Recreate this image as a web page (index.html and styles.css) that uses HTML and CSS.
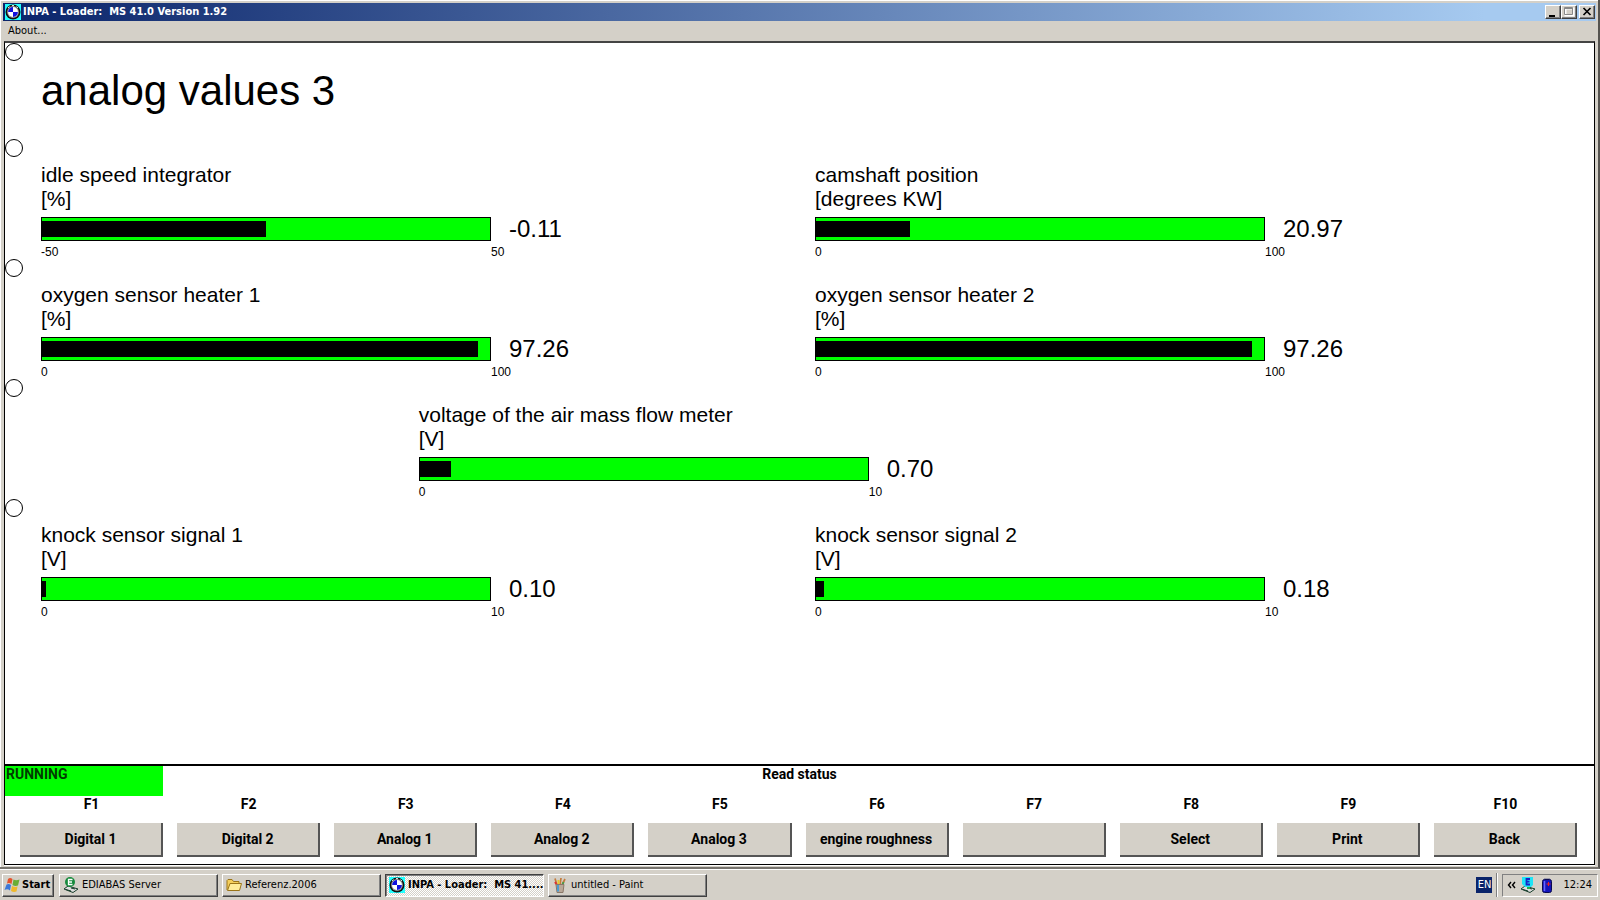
FILE: index.html
```
<!DOCTYPE html>
<html lang="en">
<head>
<meta charset="utf-8">
<title>INPA - Loader: MS 41.0 Version 1.92</title>
<link rel="stylesheet" href="styles.css">
</head>
<body>
<svg class="defs" aria-hidden="true">
  <symbol id="roundel" viewBox="0 0 16 16">
    <rect width="16" height="16" fill="#2ff"/>
    <circle cx="8" cy="8" r="7.5" fill="#111"/>
    <circle cx="8" cy="8" r="5.9" fill="#999"/>
    <circle cx="8" cy="8" r="4.9" fill="#fff"/>
    <path d="M8 8V3.100A4.900 4.900 0 0 0 3.100 8zM8 8v4.900A4.900 4.900 0 0 0 12.900 8z" fill="#11d"/>
    <path d="M3 4l1.500-1.500M11.500 2.500L13 4M7 1.500h2" stroke="#ddd"/>
  </symbol>
  <symbol id="server" viewBox="0 0 16 16">
    <path d="M1 12l4-3 10 3-5 3.500z" fill="#ddd" stroke="#173d2a"/>
    <path d="M3 12.500l5 1.500M8 11l4 1" stroke="#173d2a"/>
  </symbol>
</svg>
<div class="screen">
  <main class="window">
    <header class="titlebar">
      <svg class="icon"><use href="#roundel"/></svg>
      <h1 class="caption">INPA - Loader:&nbsp; MS 41.0 Version 1.92</h1>
      <div class="controls">
        <button class="ctl" aria-label="Minimize"><svg width="14" height="12"><path d="M3 9h6v2H3z"/></svg></button>
        <button class="ctl" aria-label="Maximize" disabled><svg width="14" height="12"><path d="M3.500 2.500h8v7h-8z" fill="none" stroke="#fff" stroke-width="2"/><path d="M2.500 1.500h8v7h-8zM2.500 2.500h8" fill="none" stroke="#888"/></svg></button>
        <button class="ctl close" aria-label="Close"><svg width="14" height="12"><path d="M3.500 2l7 7M10.500 2l-7 7" stroke="#000" stroke-width="1.700"/></svg></button>
      </div>
    </header>
    <nav class="menubar"><button class="menu">About...</button></nav>
    <section class="client">
      <div class="panel">
        <div class="row head"><i class="dot"></i><h2>analog values 3</h2></div>
        <div class="row"><i class="dot"></i>
          <div class="gauge"><div class="label">idle speed integrator<br>[%]</div><div class="line"><div class="bar"><div class="fill" style="width:49.89%"></div></div><output>-0.11</output></div><div class="scale"><span>-50</span><span>50</span></div></div>
          <div class="gauge"><div class="label">camshaft position<br>[degrees KW]</div><div class="line"><div class="bar"><div class="fill" style="width:20.97%"></div></div><output>20.97</output></div><div class="scale"><span>0</span><span>100</span></div></div>
        </div>
        <div class="row"><i class="dot"></i>
          <div class="gauge"><div class="label">oxygen sensor heater 1<br>[%]</div><div class="line"><div class="bar"><div class="fill" style="width:97.26%"></div></div><output>97.26</output></div><div class="scale"><span>0</span><span>100</span></div></div>
          <div class="gauge"><div class="label">oxygen sensor heater 2<br>[%]</div><div class="line"><div class="bar"><div class="fill" style="width:97.26%"></div></div><output>97.26</output></div><div class="scale"><span>0</span><span>100</span></div></div>
        </div>
        <div class="row"><i class="dot"></i>
          <div class="gauge middle"><div class="label">voltage of the air mass flow meter<br>[V]</div><div class="line"><div class="bar"><div class="fill" style="width:7%"></div></div><output>0.70</output></div><div class="scale"><span>0</span><span>10</span></div></div>
        </div>
        <div class="row"><i class="dot"></i>
          <div class="gauge"><div class="label">knock sensor signal 1<br>[V]</div><div class="line"><div class="bar"><div class="fill" style="width:1%"></div></div><output>0.10</output></div><div class="scale"><span>0</span><span>10</span></div></div>
          <div class="gauge"><div class="label">knock sensor signal 2<br>[V]</div><div class="line"><div class="bar"><div class="fill" style="width:1.8%"></div></div><output>0.18</output></div><div class="scale"><span>0</span><span>10</span></div></div>
        </div>
      </div>
      <div class="status"><div class="running">RUNNING</div><div class="state">Read status</div></div>
      <div class="keys">
        <div class="key"><label for="f1">F1</label><button id="f1">Digital 1</button></div>
        <div class="key"><label for="f2">F2</label><button id="f2">Digital 2</button></div>
        <div class="key"><label for="f3">F3</label><button id="f3">Analog 1</button></div>
        <div class="key"><label for="f4">F4</label><button id="f4">Analog 2</button></div>
        <div class="key"><label for="f5">F5</label><button id="f5">Analog 3</button></div>
        <div class="key"><label for="f6">F6</label><button id="f6">engine roughness</button></div>
        <div class="key"><label for="f7">F7</label><button id="f7"></button></div>
        <div class="key"><label for="f8">F8</label><button id="f8">Select</button></div>
        <div class="key"><label for="f9">F9</label><button id="f9">Print</button></div>
        <div class="key"><label for="f10">F10</label><button id="f10">Back</button></div>
      </div>
    </section>
  </main>
  <footer class="taskbar">
    <button class="start"><svg class="icon" viewBox="0 0 16 16"><path d="M4 2q2-2 4.500 0L7.500 7Q5 5.500 3 6.500z" fill="#e5532d"/><path d="M9.500 2.500q2.500 1.500 6 0L14 8.500Q11 9.500 8.500 8z" fill="#69ad35"/><path d="M2.500 7.500q2.500-1 4.500 .5L6 13.500q-2.500-2-5.500-.5z" fill="#3c78d8"/><path d="M8 9q3 1.500 5.500 .5L12.500 14.500Q9.500 15.500 7 14z" fill="#f0b82a"/></svg>Start</button>
    <button class="task"><svg class="icon" viewBox="0 0 16 16"><use href="#server"/><circle cx="7" cy="5" r="5" fill="#168a3c"/><path d="M9.500 2.500h-4v5h4M5.500 5h3.500" fill="none" stroke="#fff" stroke-width="1.300"/></svg><span>EDIABAS Server</span></button>
    <button class="task"><svg class="icon" viewBox="0 0 16 16"><path d="M1 13V3.500L2 2.500h4l1.500 2H13V7" fill="#f5cf5c" stroke="#9b7418"/><path d="M1.500 13.500L4 6.500h11.500L13.500 13.500z" fill="#ffec9a" stroke="#9b7418"/></svg><span>Referenz.2006</span></button>
    <button class="task active"><svg class="icon"><use href="#roundel"/></svg><span>INPA - Loader:&nbsp; MS 41....</span></button>
    <button class="task"><svg class="icon" viewBox="0 0 16 16"><path d="M5 8L3 1.500M8 8l1-7M10 8l3-6" stroke="#c27a3a" stroke-width="1.700"/><path d="M3 5l2 3" stroke="#d33" stroke-width="2"/><path d="M6.500 3v5" stroke="#e8c92e" stroke-width="2"/><path d="M11.500 5l-1 3" stroke="#4b9b4b" stroke-width="2"/><path d="M4 7.500h8l-1 8H5z" fill="#b9a898" stroke="#8a7768"/><path d="M6 8v6.500" stroke="#4c9bd0" stroke-width="2"/></svg><span>untitled - Paint</span></button>
    <button class="lang">EN</button>
    <div class="divider"></div>
    <div class="tray">
      <button class="chevron" aria-label="Show hidden icons"><svg width="9" height="8"><path d="M4 1L1.500 4 4 7M8 1L5.500 4 8 7" fill="none" stroke="#000" stroke-width="1.400"/></svg></button>
      <svg class="icon" viewBox="0 0 16 16"><use href="#server"/><path d="M7 8h3v4H7z" fill="#24b04c"/><path d="M2 0h11v8L11 10H5L2 7z" fill="#1de4f5"/><path d="M10 2H6.500v5.500H10M6.500 4.700h3" fill="none" stroke="#1623c8" stroke-width="1.800"/></svg>
      <svg class="icon" viewBox="0 0 16 16"><path d="M5 1h6v2H5z" fill="#99a"/><rect x="3.500" y="2.500" width="9" height="13" rx="2" fill="#1414b8" stroke="#0a0a50"/><path d="M5.500 4v10" stroke="#66f" stroke-width="1.500"/><path d="M9.500 5v4M7.500 7h4" stroke="#e22"/></svg>
      <time>12:24</time>
    </div>
  </footer>
</div>
</body>
</html>
```
FILE: styles.css
```
* { box-sizing: border-box; }
body { margin: 0; background: #d4d0c8; color: #000; font: 11px/14px "DejaVu Sans Condensed", "Noto Sans", sans-serif; }
button { font: inherit; color: inherit; border: 0; padding: 0; background: #d4d0c8; }
.defs { position: absolute; width: 0; height: 0; }
.icon { width: 16px; height: 16px; flex: none; }
.screen { min-height: 100vh; display: flex; flex-direction: column; }
.window { flex: 1; display: flex; flex-direction: column; padding: 3px 2px 2px 3px; border-right: 2px solid #55534f; border-bottom: 2px solid #77746e; box-shadow: inset 1px 1px #fff; }
.titlebar { display: flex; align-items: center; height: 18px; padding: 0 1px 0 2px; background: linear-gradient(90deg, #0a246a, #a6caf0 93%); color: #fff; }
.caption { flex: 1; margin: 0 0 0 2px; font-size: 11px; line-height: 16px; font-weight: bold; }
.controls { display: flex; }
.ctl { width: 16px; height: 14px; display: flex; color: #000; border: 1px solid; border-color: #fff #404040 #404040 #fff; box-shadow: inset -1px -1px #808080; }
.close { margin-left: 2px; }
.menubar { height: 20px; padding: 3px 5px; display: flex; }
.client { flex: 1; display: flex; flex-direction: column; margin: 0 1px; border: 1px solid #000; border-top: 2px solid #444; background: #fff; box-shadow: 0 1px #fff; }
.panel { flex: 1; border-bottom: 2px solid #000; }
.row { position: relative; height: 120px; padding: 24px 5px 0 36px; display: grid; grid-template-columns: 1fr 1fr; font-family: "Liberation Sans", Arial, sans-serif; }
.head { height: 96px; }
.head h2 { margin: 0; font-size: 42px; line-height: 48px; font-weight: normal; }
.dot { position: absolute; left: 0; top: 0; width: 18px; height: 18px; border: 1px solid #000; border-radius: 50%; }
.label { font-size: 21px; line-height: 24px; }
.line { display: flex; align-items: center; height: 24px; margin-top: 6px; gap: 18px; }
.bar { width: 450px; height: 24px; padding: 3px 0; border: 1px solid #000; background: #0f0; }
.fill { height: 16px; background: #000; }
.line output { font-size: 24px; line-height: 26px; }
.scale { display: flex; justify-content: space-between; width: 450px; margin-top: 4px; font-size: 12px; line-height: 14px; }
.scale span:last-child { width: 0; white-space: nowrap; }
.middle { grid-column: 1 / 3; margin-left: 24.4%; }
.status { display: grid; grid-template-columns: 1fr auto 1fr; height: 30px; font: bold 14px/16px Roboto, "Liberation Sans", sans-serif; }
.running { width: 158px; padding-left: 1px; background: #0f0; color: #003c00; }
.keys { display: grid; grid-template-columns: repeat(10, 1fr); gap: 14px; padding: 0 17px 7px 15px; font: bold 14px/16px Roboto, "Liberation Sans", sans-serif; }
.key { display: flex; flex-direction: column; text-align: center; }
.key button { height: 34px; margin-top: 11px; border-right: 2px solid #555; border-bottom: 2px solid #555; }
.taskbar { display: flex; align-items: center; gap: 4px; height: 31px; padding: 0 2px 0 2px; border-top: 1px solid #fff; }
.start, .task { height: 23px; display: flex; align-items: center; border: 1px solid; border-color: #fff #404040 #404040 #fff; box-shadow: inset -1px -1px #808080; }
.start { width: 52px; padding-left: 1px; gap: 2px; margin-right: 1px; font-weight: bold; }
.task { width: 159px; padding: 0 2px 0 3px; gap: 3px; }
.task span { white-space: nowrap; }
.active { font-weight: bold; background: repeating-conic-gradient(#fff 0 25%, #d4d0c8 0 50%) 0 0 / 2px 2px; border-color: #404040 #fff #fff #404040; box-shadow: inset 1px 1px #808080; }
.lang { width: 16px; height: 16px; margin-left: auto; background: #0a246a; color: #fff; }
.divider { width: 2px; height: 24px; border-left: 1px solid #808080; border-right: 1px solid #fff; }
.tray { display: flex; align-items: center; gap: 3px; height: 23px; padding: 0 5px 0 4px; border: 1px solid; border-color: #808080 #fff #fff #808080; }
.tray time { margin-left: 5px; }
.chevron { display: flex; margin-right: 1px; }
```
